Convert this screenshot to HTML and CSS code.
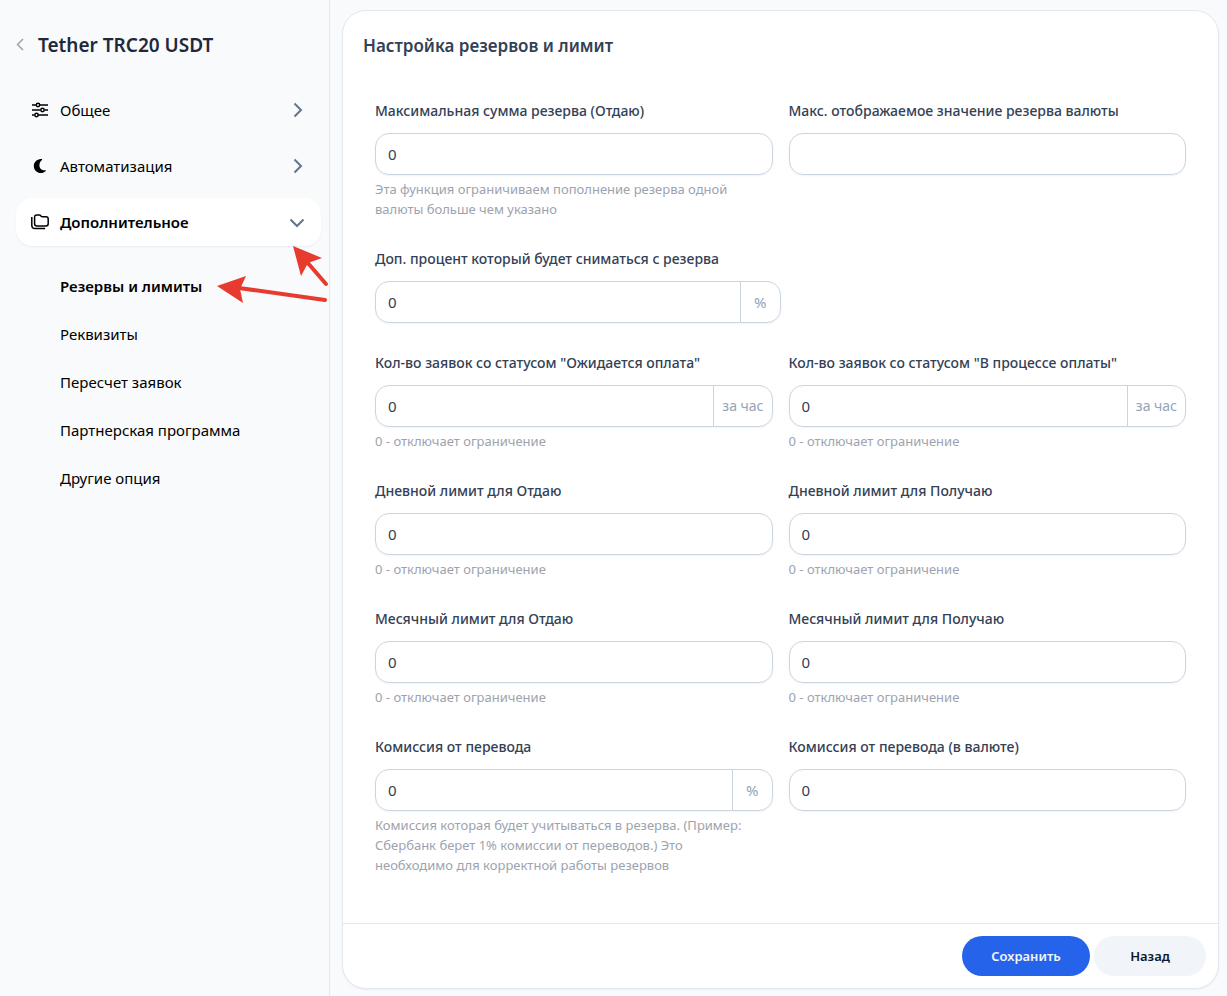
FILE: index.html
```html
<!DOCTYPE html>
<html lang="ru">
<head>
    <meta charset="UTF-8">
    <meta name="viewport" content="width=device-width, initial-scale=1.0">
    <title>Tether TRC20 USDT</title>
    <link rel="stylesheet" href="styles.css">
</head>
<body>

<div class="layout">
    <aside class="sidebar">
        <div class="sidebar-head">
            <a class="back" href="#" aria-label="Назад">
                <svg width="8" height="14" viewBox="0 0 8 14"><path d="M7 1 1.500 6.500 7 12"/></svg>
            </a>
            <h1 class="sidebar-title">Tether TRC20 USDT</h1>
        </div>

        <nav class="menu">
            <a class="menu-item" href="#">
                <svg class="menu-icon" width="18" height="18" viewBox="0 0 18 18">
                    <path d="M1 4h4M9 4h8M1 9h8.500M13.500 9H17M1 14h2M7 14h10"/>
                    <circle cx="7" cy="4" r="1.700"/>
                    <circle cx="11.500" cy="9" r="1.700"/>
                    <circle cx="5.500" cy="14" r="1.700"/>
                </svg>
                <span>Общее</span>
                <svg class="chevron" width="10" height="16" viewBox="0 0 10 16"><path d="M1.500 1.500 8 8l-6.500 6.500"/></svg>
            </a>
            <a class="menu-item" href="#">
                <svg class="menu-icon" width="18" height="18" viewBox="0 0 18 18">
                    <path class="filled" d="M9.800 2C5.800 2.200 2.800 5.200 2.800 9s3.100 7.100 7 7.100c2 0 3.700-.8 4.900-2.100.4-.4 0-.9-.5-.8-3.400.5-5.800-1.600-5.800-4.900 0-2.200 1-4 2.600-5.200.4-.4.2-1.100-.4-1.100z"/>
                </svg>
                <span>Автоматизация</span>
                <svg class="chevron" width="10" height="16" viewBox="0 0 10 16"><path d="M1.500 1.500 8 8l-6.500 6.500"/></svg>
            </a>
            <a class="menu-item active" href="#">
                <svg class="menu-icon" width="18" height="18" viewBox="0 0 18 18">
                    <path d="M.8 4v8.200q0 3.300 3.300 3.300h10"/>
                    <path d="M3.600 4.200q0-2.200 2.200-2.200h2.500q.8 0 1.300.6l.5.600q.5.500 1.200.5h3.700q2.200 0 2.200 2.200v4.900q0 2.200-2.200 2.200H5.800q-2.200 0-2.200-2.200z"/>
                </svg>
                <span>Дополнительное</span>
                <svg class="chevron" width="14" height="10" viewBox="0 0 14 10"><path d="M1.500 2.500 8 9l6.500-6.500"/></svg>
            </a>
        </nav>

        <nav class="submenu">
            <a class="submenu-item active" href="#">Резервы и лимиты</a>
            <a class="submenu-item" href="#">Реквизиты</a>
            <a class="submenu-item" href="#">Пересчет заявок</a>
            <a class="submenu-item" href="#">Партнерская программа</a>
            <a class="submenu-item" href="#">Другие опция</a>
        </nav>

        <!-- Pointer arrows over the menu -->
        <svg class="arrows" width="112" height="60" viewBox="0 0 112 60">
            <path class="arrow-head" d="M76 1l29 12-14 5-7 13z"/>
            <path class="arrow-line" d="M90 17l19 22"/>
            <path class="arrow-head" d="M0 41l29-10-6 13 3 14z"/>
            <path class="arrow-line" d="M22 43l86 12"/>
        </svg>
    </aside>

    <main class="main">
        <form class="card">
            <h2 class="card-title">Настройка резервов и лимит</h2>

            <div class="fields">
                <div class="field">
                    <label for="maxReserve">Максимальная сумма резерва (Отдаю)</label>
                    <div class="control"><input type="text" id="maxReserve" value="0"></div>
                    <p class="hint">Эта функция ограничиваем пополнение резерва одной валюты больше чем указано</p>
                </div>
                <div class="field">
                    <label for="maxShown">Макс. отображаемое значение резерва валюты</label>
                    <div class="control"><input type="text" id="maxShown" value=""></div>
                </div>

                <div class="field single">
                    <label for="extraPercent">Доп. процент который будет сниматься с резерва</label>
                    <div class="control"><input type="text" id="extraPercent" value="0"><span class="unit percent">%</span></div>
                </div>

                <div class="field">
                    <label for="waiting">Кол-во заявок со статусом "Ожидается оплата"</label>
                    <div class="control"><input type="text" id="waiting" value="0"><span class="unit">за час</span></div>
                    <p class="hint">0 - отключает ограничение</p>
                </div>
                <div class="field">
                    <label for="processing">Кол-во заявок со статусом "В процессе оплаты"</label>
                    <div class="control"><input type="text" id="processing" value="0"><span class="unit">за час</span></div>
                    <p class="hint">0 - отключает ограничение</p>
                </div>

                <div class="field">
                    <label for="dayGive">Дневной лимит для Отдаю</label>
                    <div class="control"><input type="text" id="dayGive" value="0"></div>
                    <p class="hint">0 - отключает ограничение</p>
                </div>
                <div class="field">
                    <label for="dayGet">Дневной лимит для Получаю</label>
                    <div class="control"><input type="text" id="dayGet" value="0"></div>
                    <p class="hint">0 - отключает ограничение</p>
                </div>

                <div class="field">
                    <label for="monthGive">Месячный лимит для Отдаю</label>
                    <div class="control"><input type="text" id="monthGive" value="0"></div>
                    <p class="hint">0 - отключает ограничение</p>
                </div>
                <div class="field">
                    <label for="monthGet">Месячный лимит для Получаю</label>
                    <div class="control"><input type="text" id="monthGet" value="0"></div>
                    <p class="hint">0 - отключает ограничение</p>
                </div>

                <div class="field">
                    <label for="fee">Комиссия от перевода</label>
                    <div class="control"><input type="text" id="fee" value="0"><span class="unit percent">%</span></div>
                    <p class="hint">Комиссия которая будет учитываться в резерва. (Пример: Сбербанк берет 1% комиссии от переводов.) Это необходимо для корректной работы резервов</p>
                </div>
                <div class="field">
                    <label for="feeCurrency">Комиссия от перевода (в валюте)</label>
                    <div class="control"><input type="text" id="feeCurrency" value="0"></div>
                </div>
            </div>

            <div class="card-footer">
                <button class="button save" type="submit">Сохранить</button>
                <button class="button cancel" type="button">Назад</button>
            </div>
        </form>
    </main>
</div>

</body>
</html>
```
FILE: styles.css
```css
* {
    box-sizing: border-box;
}

body {
    margin: 0;
    background-color: #f8fafc;
    color: #334155;
    font-family: "Noto Sans", "Open Sans", sans-serif;
    font-size: 14px;
    line-height: 20px;
}

a {
    color: #000;
    text-decoration: none;
}

svg {
    fill: none;
    stroke: currentColor;
    flex-shrink: 0;
    overflow: visible;
}

.layout {
    display: flex;
    min-height: 100vh;
}

/* Sidebar */
.sidebar {
    position: relative;
    width: 330px;
    flex-shrink: 0;
    padding: 31px 8px 16px 16px;
    border-right: 1px solid #e2e8f0;
}

.sidebar-head {
    display: flex;
    align-items: center;
    gap: 14px;
    height: 28px;
    margin-bottom: 27px;
}

.back {
    display: flex;
    color: #9ca3af;
    stroke-width: 1.5;
}

.sidebar-title {
    margin: 0;
    color: #1e293b;
    font-size: 19px;
    font-weight: 600;
}

.menu {
    display: flex;
    flex-direction: column;
    gap: 8px;
}

.menu-item {
    display: flex;
    align-items: center;
    gap: 11px;
    height: 48px;
    padding: 0 18px 0 15px;
    border-radius: 16px;
    font-size: 15px;
}

.menu-item.active {
    background-color: #fff;
    box-shadow: 0 1px 2px rgba(15, 23, 42, 0.06);
    font-weight: 600;
}

.menu-icon {
    stroke-width: 1.5;
}

.filled {
    fill: currentColor;
    stroke: none;
}

.chevron {
    margin-left: auto;
    color: #64748b;
    stroke-width: 2;
}

.submenu {
    margin-top: 16px;
    padding-left: 44px;
}

.submenu-item {
    display: flex;
    align-items: center;
    height: 48px;
    font-size: 15px;
}

.submenu-item.active {
    font-weight: 600;
}

.arrows {
    position: absolute;
    top: 245px;
    left: 217px;
    pointer-events: none;
}

.arrow-head {
    fill: #e63b2e;
    stroke: none;
}

.arrow-line {
    stroke: #e63b2e;
    stroke-width: 4;
    stroke-linecap: round;
}

/* Content */
.main {
    flex: 1;
    padding: 10px 8px 7px 12px;
    border-right: 1px solid #cbd5e1;
}

.card {
    background-color: #fff;
    border: 1px solid #e2e8f0;
    border-radius: 24px;
    box-shadow: 0 1px 2px rgba(15, 23, 42, 0.05);
}

.card-title {
    margin: 0;
    padding: 24px 20px;
    font-size: 17px;
    font-weight: 600;
    line-height: 22px;
}

.fields {
    display: grid;
    grid-template-columns: 1fr 1fr;
    gap: 30px 16px;
    padding: 20px 32px 48px;
}

.single {
    grid-column: span 2;
    width: 50%;
}

.field label {
    display: block;
    margin-bottom: 12px;
    font-weight: 500;
}

.control {
    display: flex;
    height: 42px;
    overflow: hidden;
    border: 1px solid #cbd5e1;
    border-radius: 14px;
    box-shadow: 0 1px 2px rgba(15, 23, 42, 0.05);
}

.control input {
    flex: 1;
    min-width: 0;
    padding: 0 12px;
    border: none;
    outline: none;
    background: none;
    color: #334155;
    font-family: inherit;
    font-size: 15px;
}

.unit {
    display: flex;
    align-items: center;
    padding: 0 8px;
    border-left: 1px solid #cbd5e1;
    color: #94a3b8;
}

.percent {
    padding: 0 13px;
    font-size: 15px;
}

.hint {
    margin: 4px 0 0;
    padding-right: 16px;
    color: #9ca3af;
    font-size: 13px;
}

.card-footer {
    display: flex;
    justify-content: flex-end;
    gap: 4px;
    padding: 12px;
    border-top: 1px solid #e2e8f0;
}

.button {
    height: 40px;
    border: none;
    border-radius: 20px;
    font-family: inherit;
    font-size: 13px;
    font-weight: 600;
    cursor: pointer;
}

.button.save {
    width: 128px;
    background-color: #2563eb;
    color: #f1f5f9;
}

.button.cancel {
    width: 112px;
    background-color: #f1f5f9;
    color: #0f172a;
}
```
